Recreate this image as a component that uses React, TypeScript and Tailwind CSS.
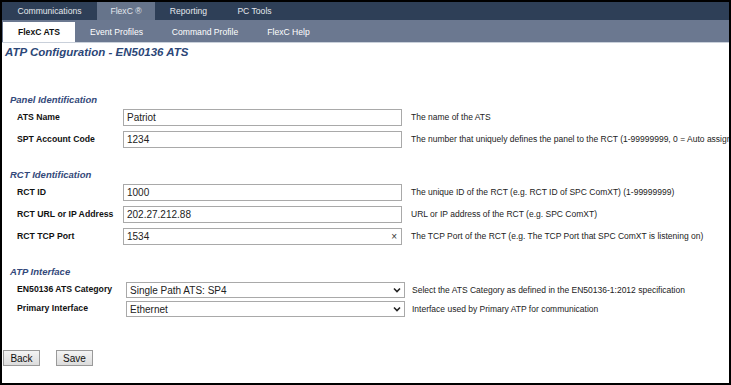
import React from "react";

const Chevron = () => (
  <svg width="8" height="6" viewBox="0 0 8 6" className="shrink-0">
    <polyline points="1,1.5 4,4.5 7,1.5" fill="none" stroke="#222" strokeWidth="1.6" />
  </svg>
);

function Heading({ children, mt }: { children: React.ReactNode; mt: string }) {
  return (
    <div className={`${mt} ml-[8px] text-[9.5px] leading-[12px] font-bold italic text-[#34497a]`}>
      {children}
    </div>
  );
}

function InputRow({
  label,
  value,
  desc,
  clear,
}: {
  label: string;
  value: string;
  desc: string;
  clear?: boolean;
}) {
  return (
    <div className="flex items-center h-[17px] pl-[15px]">
      <div className="w-[106px] shrink-0 text-[8.7px] font-bold text-[#111]">{label}</div>
      <div className="w-[279px] h-[17px] shrink-0 border border-[#a9a9a9] bg-white flex items-center pl-[3px] pr-[4px] text-[10px] text-[#222]">
        <span className="flex-1">{value}</span>
        {clear && <span className="text-[10px] text-[#333] leading-none">×</span>}
      </div>
      <div className="ml-[9px] whitespace-nowrap text-[8.5px] text-[#222]">{desc}</div>
    </div>
  );
}

function SelectRow({ label, value, desc }: { label: string; value: string; desc: string }) {
  return (
    <div className="flex items-center h-[16px] pl-[15px]">
      <div className="w-[109px] shrink-0 text-[8.7px] font-bold text-[#111]">{label}</div>
      <div className="w-[279px] h-[16px] shrink-0 border border-[#a9a9a9] bg-white flex items-center pl-[3px] pr-[3px] text-[10px] text-[#222]">
        <span className="flex-1">{value}</span>
        <Chevron />
      </div>
      <div className="ml-[7px] whitespace-nowrap text-[8.5px] text-[#222]">{desc}</div>
    </div>
  );
}

function Button({ children }: { children: React.ReactNode }) {
  return (
    <div className="w-[37px] h-[16px] border border-[#9a9a9a] bg-gradient-to-b from-[#f4f4f4] to-[#dcdcdc] flex items-center justify-center text-[10px] text-[#111]">
      {children}
    </div>
  );
}

export default function App() {
  return (
    <div className="w-[731px] h-[385px] box-border border-2 border-black bg-white overflow-hidden flex flex-col font-['Liberation_Sans',Arial,sans-serif]">
      {/* top nav */}
      <div className="h-[18px] shrink-0 bg-[#2e3f57] flex text-[8.6px] text-[#e4e8ee]">
        <div className="w-[95px] flex items-center justify-center">Communications</div>
        <div className="w-[58px] flex items-center justify-center bg-[#66748b]">FlexC ®</div>
        <div className="w-[67px] flex items-center justify-center">Reporting</div>
        <div className="w-[65px] flex items-center justify-center">PC Tools</div>
      </div>
      {/* sub nav */}
      <div className="h-[22px] shrink-0 bg-[#6b7890] flex items-end pl-[1px] text-[8.6px] text-white">
        <div className="w-[72px] h-[20px] bg-white text-[#111] font-bold flex items-center justify-center">
          FlexC ATS
        </div>
        <div className="w-[83px] h-[20px] flex items-center justify-center">Event Profiles</div>
        <div className="w-[94px] h-[20px] flex items-center justify-center">Command Profile</div>
        <div className="w-[73px] h-[20px] flex items-center justify-center">FlexC Help</div>
      </div>
      <div className="h-[1px] shrink-0 bg-[#c9d0da]" />

      {/* content */}
      <div className="flex flex-col">
        <div className="mt-[2px] ml-[3px] text-[11.5px] leading-[14px] font-bold italic text-[#2b4677]">
          ATP Configuration - EN50136 ATS
        </div>

        <Heading mt="mt-[35px]">Panel Identification</Heading>
        <div className="mt-[3px] flex flex-col gap-[5px]">
          <InputRow label="ATS Name" value="Patriot" desc="The name of the ATS" />
          <InputRow
            label="SPT Account Code"
            value="1234"
            desc="The number that uniquely defines the panel to the RCT (1-99999999, 0 = Auto assign)"
          />
        </div>

        <Heading mt="mt-[21px]">RCT Identification</Heading>
        <div className="mt-[3px] flex flex-col gap-[5px]">
          <InputRow
            label="RCT ID"
            value="1000"
            desc="The unique ID of the RCT (e.g. RCT ID of SPC ComXT) (1-99999999)"
          />
          <InputRow
            label="RCT URL or IP Address"
            value="202.27.212.88"
            desc="URL or IP address of the RCT (e.g. SPC ComXT)"
          />
          <InputRow
            label="RCT TCP Port"
            value="1534"
            clear
            desc="The TCP Port of the RCT (e.g. The TCP Port that SPC ComXT is listening on)"
          />
        </div>

        <Heading mt="mt-[21px]">ATP Interface</Heading>
        <div className="mt-[4px] flex flex-col gap-[3px]">
          <SelectRow
            label="EN50136 ATS Category"
            value="Single Path ATS: SP4"
            desc="Select the ATS Category as defined in the EN50136-1:2012 specification"
          />
          <SelectRow
            label="Primary Interface"
            value="Ethernet"
            desc="Interface used by Primary ATP for communication"
          />
        </div>

        <div className="mt-[33px] ml-[1px] flex gap-[16px]">
          <Button>Back</Button>
          <Button>Save</Button>
        </div>
      </div>
    </div>
  );
}
